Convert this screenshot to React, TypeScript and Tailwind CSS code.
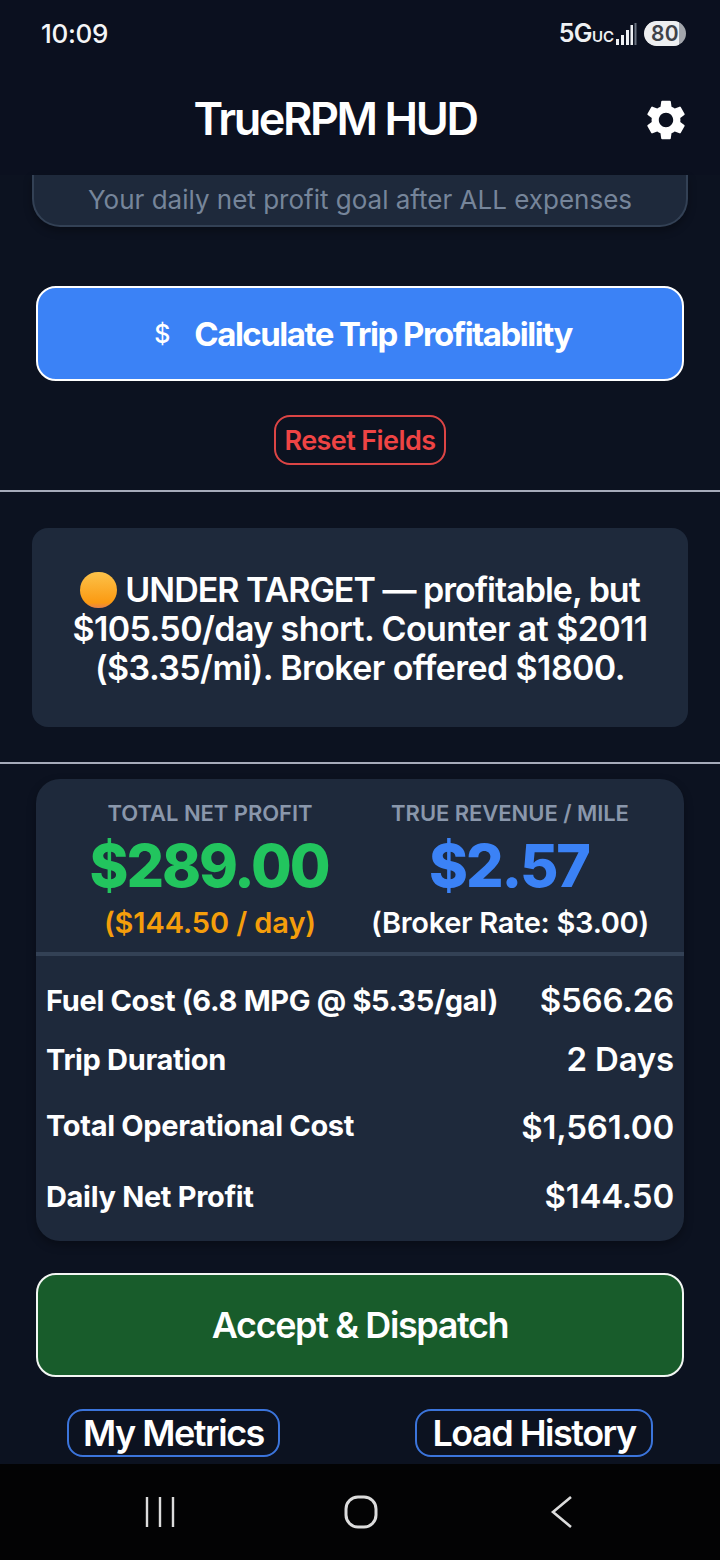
import React from "react";

const font = { fontFamily: "Inter, 'Liberation Sans', sans-serif" };

function Row({ label, value, className, valueClass }: { label: string; value: string; className: string; valueClass?: string }) {
  return (
    <div className={`flex items-center justify-between pl-[10px] pr-[10px] text-white ${className}`}>
      <span className="text-[29px] font-bold tracking-[-0.33px]">{label}</span>
      <span className={`text-[33px] font-semibold tracking-[-0.2px] ${valueClass ?? ""}`}>{value}</span>
    </div>
  );
}

export default function App() {
  return (
    <div style={font} className="w-[720px] h-[1560px] bg-[#0c1220] flex flex-col overflow-hidden text-white">
      <header className="h-[175px] shrink-0 bg-[#0b101f] flex flex-col">
        <div className="h-[67px] flex items-center justify-between pl-[41px] pr-[34px]">
          <span className="text-[26px] font-medium tracking-[-0.3px] text-[#f4f5f7]">10:09</span>
          <div className="flex items-center gap-[7px]">
            <div className="flex items-baseline text-[#eef0f3]">
              <span className="text-[25px] font-semibold tracking-[-0.6px]">5G</span>
              <span className="text-[15px] font-semibold">UC</span>
            </div>
            <svg width="22" height="24" viewBox="0 0 22 24" className="-ml-[6px]">
              <rect x="1" y="17" width="3" height="6" fill="#eef0f3" />
              <rect x="6" y="13" width="3" height="10" fill="#eef0f3" />
              <rect x="11" y="8" width="3" height="15" fill="#eef0f3" />
              <rect x="15.5" y="3" width="2.5" height="20" fill="#eef0f3" />
              <rect x="19.5" y="1" width="2" height="22" fill="#6b7280" />
            </svg>
            <div className="relative w-[42px] h-[25px] rounded-full bg-[#a3a6ac] overflow-hidden flex items-center">
              <div className="w-[35px] h-full bg-[#eeeff1] rounded-l-full" />
              <span className="absolute left-[7px] top-0 text-[21px] leading-[25px] font-semibold tracking-[0.2px] text-[#3f4248]">80</span>
            </div>
          </div>
        </div>
        <div className="relative flex-1 flex items-start justify-center pt-[25px] pr-[50px]">
          <h1 className="text-[45px] leading-[54px] font-semibold tracking-[-2.4px] text-white">TrueRPM HUD</h1>
          <svg className="absolute left-[642px] top-[29px]" width="48" height="48" viewBox="0 0 24 24" fill="#fff">
            <path d="M19.14 12.94c.04-.3.06-.61.06-.94 0-.32-.02-.64-.07-.94l2.03-1.58a.49.49 0 0 0 .12-.61l-1.92-3.32a.488.488 0 0 0-.59-.22l-2.39.96c-.5-.38-1.03-.7-1.62-.94l-.36-2.54a.484.484 0 0 0-.48-.41h-3.84c-.24 0-.43.17-.47.41l-.36 2.54c-.59.24-1.13.57-1.62.94l-2.39-.96c-.22-.08-.47 0-.59.22L2.74 8.87c-.12.21-.08.47.12.61l2.03 1.58c-.05.3-.09.63-.09.94s.02.64.07.94l-2.03 1.58a.49.49 0 0 0-.12.61l1.92 3.32c.12.22.37.29.59.22l2.39-.96c.5.38 1.03.7 1.62.94l.36 2.54c.05.24.24.41.48.41h3.84c.24 0 .44-.17.47-.41l.36-2.54c.59-.24 1.13-.56 1.62-.94l2.39.96c.22.08.47 0 .59-.22l1.92-3.32c.12-.22.07-.47-.12-.61l-2.01-1.58zM12 15.6c-1.98 0-3.6-1.62-3.6-3.6s1.62-3.6 3.6-3.6 3.6 1.62 3.6 3.6-1.62 3.6-3.6 3.6z" />
          </svg>
        </div>
      </header>

      <main className="flex-1 flex flex-col min-h-0">
        <div className="mx-[32px] h-[52px] shrink-0 bg-[#1e293b] border-x-2 border-b-2 border-[#334155] rounded-b-[28px] flex items-start justify-center pt-[7px] shadow-[0_4px_8px_rgba(0,0,0,0.3)]">
          <span className="text-[26px] leading-[36px] tracking-[0px] text-[#76859a]">Your daily net profit goal after ALL expenses</span>
        </div>

        <button className="mt-[59px] mx-[36px] h-[95px] shrink-0 rounded-[20px] border-2 border-white bg-[#3b82f6] flex items-center justify-center gap-[24px] pl-[6px] pt-[2px]">
          <span className="text-[25px] font-medium text-white">$</span>
          <span className="text-[33px] font-bold tracking-[-1.5px] text-white">Calculate Trip Profitability</span>
        </button>

        <button className="mt-[34px] self-center w-[172px] h-[50px] shrink-0 rounded-[16px] border-2 border-[#dc4545] text-[27px] font-semibold tracking-[-0.6px] text-[#ef4444] flex items-center justify-center pt-[3px]">
          Reset Fields
        </button>

        <div className="mt-[25px] h-[2px] shrink-0 bg-[#a6abba]" />

        <section className="mt-[36px] mx-[32px] h-[199px] shrink-0 rounded-[16px] bg-[#1e293b] flex items-center justify-center text-center pt-[2px]">
          <p className="text-[34px] leading-[39px] font-semibold tracking-[-0.6px] text-white">
            <span className="inline-block align-[-6px] w-[37px] h-[36px] mr-[8px] rounded-full bg-[linear-gradient(#fcc24a,#fb9a12_85%,#e8824a)]" />
            <span className="tracking-[-1px]">UNDER TARGET — profitable, but</span>
            <br />
            $105.50/day short. Counter at $2011
            <br />
            ($3.35/mi). Broker offered $1800.
          </p>
        </section>

        <div className="mt-[35px] h-[2px] shrink-0 bg-[#a6abba]" />

        <section className="mt-[15px] mx-[36px] h-[462px] shrink-0 rounded-[24px] bg-[#1e293b] flex flex-col shadow-[0_4px_10px_rgba(0,0,0,0.3)]">
          <div className="h-[173px] shrink-0 grid grid-cols-[348px_1fr] pt-[20px] text-center">
            <div className="flex flex-col items-center">
              <span className="text-[22px] leading-[28px] font-semibold tracking-[-0.05px] text-[#8a97ab]">TOTAL NET PROFIT</span>
              <span className="text-[59px] leading-[64px] font-extrabold tracking-[-2.1px] text-[#22c55e] mt-[7px] -ml-[2px]">$289.00</span>
              <span className="text-[29px] leading-[34px] font-semibold tracking-[-0.1px] text-[#f59e0b] mt-[8px]">($144.50 / day)</span>
            </div>
            <div className="flex flex-col items-center -ml-[48px]">
              <span className="text-[22px] leading-[28px] font-semibold tracking-[-0.05px] text-[#8a97ab]">TRUE REVENUE / MILE</span>
              <span className="text-[59px] leading-[64px] font-extrabold tracking-[-2.1px] text-[#3b82f6] mt-[7px] -ml-[2px]">$2.57</span>
              <span className="text-[29px] leading-[34px] font-semibold tracking-[-0.3px] text-white mt-[8px]">(Broker Rate: $3.00)</span>
            </div>
          </div>
          <div className="h-[4px] shrink-0 bg-[#334155]" />
          <Row className="h-[90px] shrink-0" label="Fuel Cost (6.8 MPG @ $5.35/gal)" value="$566.26" />
          <Row className="h-[28px] shrink-0" label="Trip Duration" value="2 Days" />
          <Row className="h-[40px] mt-[32px] shrink-0" label="Total Operational Cost" value="$1,561.00" valueClass="pt-[3px]" />
          <Row className="h-[40px] mt-[31px] shrink-0" label="Daily Net Profit" value="$144.50" />
        </section>

        <button className="mt-[32px] mx-[36px] h-[104px] shrink-0 rounded-[20px] border-2 border-[#f3f6f3] bg-[#185c2b] text-[36px] font-semibold tracking-[-1.4px] text-white flex items-center justify-center">
          Accept &amp; Dispatch
        </button>

        <div className="mt-[32px] flex justify-between pl-[67px] pr-[67px]">
          <button className="w-[213px] h-[48px] rounded-[16px] border-2 border-[#3b74db] text-[36px] font-semibold tracking-[-1.5px] text-white flex items-center justify-center pb-[1px]">My Metrics</button>
          <button className="w-[238px] h-[48px] rounded-[16px] border-2 border-[#3b74db] text-[36px] font-semibold tracking-[-1.5px] text-white flex items-center justify-center pb-[1px]">Load History</button>
        </div>
      </main>

      <nav className="h-[96px] shrink-0 bg-[#030304] grid grid-cols-3 items-center pl-[60px] pr-[58px]">
        <div className="flex justify-center">
          <svg width="32" height="32" viewBox="0 0 32 32" fill="none" stroke="#dcdcdc" strokeWidth="2.4">
            <path d="M3 1v30M16 1v30M29 1v30" />
          </svg>
        </div>
        <div className="flex justify-center">
          <svg width="34" height="34" viewBox="0 0 34 34" fill="none" stroke="#dcdcdc" strokeWidth="3">
            <rect x="2" y="2" width="30" height="30" rx="12" />
          </svg>
        </div>
        <div className="flex justify-center">
          <svg width="24" height="34" viewBox="0 0 24 34" fill="none" stroke="#dcdcdc" strokeWidth="2.6">
            <path d="M21 2 3 17l18 15" />
          </svg>
        </div>
      </nav>
    </div>
  );
}
